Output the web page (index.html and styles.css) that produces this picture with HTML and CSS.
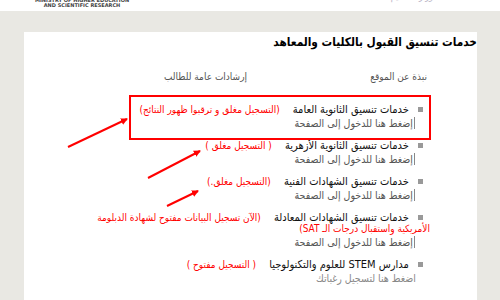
FILE: index.html
```html
<!DOCTYPE html>
<html lang="ar">
<head>
  <meta charset="UTF-8">
  <meta name="viewport" content="width=device-width, initial-scale=1.0">
  <title>خدمات تنسيق القبول بالكليات والمعاهد</title>
  <link rel="stylesheet" href="styles.css">
</head>
<body>
  <div class="topbar">
    <div class="ministry">
      <div>MINISTRY OF HIGHER EDUCATION</div>
      <div>AND SCIENTIFIC RESEARCH</div>
    </div>
    <div class="ministry-ar">وزارة التعليم</div>
  </div>

  <div class="page">
    <div class="panel">
      <h1>خدمات تنسيق القبول بالكليات والمعاهد</h1>

      <div class="nav">
        <a href="#">نبذة عن الموقع</a>
        <a href="#">إرشادات عامة للطالب</a>
      </div>

      <ul class="services">
        <li>
          <span class="name">خدمات تنسيق الثانوية العامة</span>
          <span class="note">(التسجيل مغلق و ترقبوا ظهور النتائج)</span>
          <a class="enter" href="#">إضغط هنا للدخول إلى الصفحة</a>
        </li>
        <li>
          <span class="name">خدمات تنسيق الثانوية الأزهرية</span>
          <span class="note">( التسجيل مغلق )</span>
          <a class="enter" href="#">إضغط هنا للدخول إلى الصفحة</a>
        </li>
        <li>
          <span class="name">خدمات تنسيق الشهادات الفنية</span>
          <span class="note">(التسجيل مغلق.)</span>
          <a class="enter" href="#">إضغط هنا للدخول إلى الصفحة</a>
        </li>
        <li>
          <span class="name">خدمات تنسيق الشهادات المعادلة</span>
          <span class="note">(الآن تسجيل البيانات مفتوح لشهادة الدبلومة الأمريكية واستقبال درجات الـ SAT)</span>
          <a class="enter" href="#">إضغط هنا للدخول إلى الصفحة</a>
        </li>
        <li>
          <span class="name">مدارس STEM للعلوم والتكنولوجيا</span>
          <span class="note">( التسجيل مفتوح )</span>
          <a class="enter plain" href="#">اضغط هنا لتسجيل رغباتك</a>
        </li>
      </ul>

      <!-- annotations drawn over the screenshot -->
      <div class="mark-box"></div>
      <svg class="arrows" width="500" height="300" viewBox="0 0 500 300">
        <defs>
          <marker id="head" markerWidth="7" markerHeight="7" refX="6" refY="3.5" orient="auto" markerUnits="userSpaceOnUse">
            <path d="M0,0 L7,3.5 L0,7 Z" fill="#f00"/>
          </marker>
        </defs>
        <line x1="68" y1="147" x2="127" y2="119" stroke="#f00" stroke-width="2" marker-end="url(#head)"/>
        <line x1="148" y1="178" x2="200" y2="151" stroke="#f00" stroke-width="2" marker-end="url(#head)"/>
        <line x1="167" y1="206" x2="198" y2="191" stroke="#f00" stroke-width="2" marker-end="url(#head)"/>
      </svg>
    </div>
  </div>
</body>
</html>
```

FILE: styles.css
```css
body {
  margin: 0;
  background-color: #e9e8e3;
  font-family: "DejaVu Sans Condensed", "DejaVu Sans", sans-serif;
  overflow: hidden;
}
.topbar {
  height: 11px;
  background-color: #fff;
  overflow: hidden;
  display: flex;
  justify-content: space-between;
}
.ministry {
  margin: -2px 0 0 35px;
  width: 94px;
  text-align: center;
  font-family: "DejaVu Sans", sans-serif;
  font-size: 5px;
  font-weight: bold;
  line-height: 5px;
  color: #444;
  white-space: nowrap;
}
.ministry-ar {
  margin: -8px 67px 0 0;
  font-size: 9px;
  color: #b8b4c6;
  direction: rtl;
}
.page {
  padding: 21px 23px 0 24px;
}
.panel {
  background-color: #fff;
  height: 268px;
  direction: rtl;
}
h1 {
  margin: 0;
  padding-top: 2px;
  font-size: 11.75px;
  line-height: 16px;
  font-weight: bold;
  color: #000;
}
.nav {
  display: grid;
  grid-template-columns: 180px 180px;
  padding: 20px 50px 0 0;
  font-size: 10px;
  line-height: 14px;
}
.nav a {
  color: #555;
  text-decoration: none;
}
.services {
  list-style: none;
  margin: 0;
  padding: 20px 47px 0 55px;
  font-size: 11px;
  line-height: 11px;
}
.services li {
  margin-bottom: 11px;
}
.services li::before {
  content: "";
  display: inline-block;
  width: 5px;
  height: 5px;
  background-color: #999;
  margin: 0 7px 1px 6px;
}
.name {
  color: #111;
}
.note {
  color: #f00;
  font-size: 10px;
  margin-right: 10px;
}
.enter {
  display: table;
  margin-top: 2px;
  margin-right: 15px;
  padding-right: 1px;
  border-right: 1px solid #888;
  color: #555;
  font-size: 10.5px;
  line-height: 12px;
  text-decoration: none;
}
.enter.plain {
  border-right: none;
  margin-right: 13px;
  color: #888;
}
.mark-box {
  position: absolute;
  left: 129px;
  top: 95px;
  width: 298px;
  height: 41px;
  border: 2px solid #f00;
}
.arrows {
  position: absolute;
  left: 0;
  top: 0;
  pointer-events: none;
}
```
